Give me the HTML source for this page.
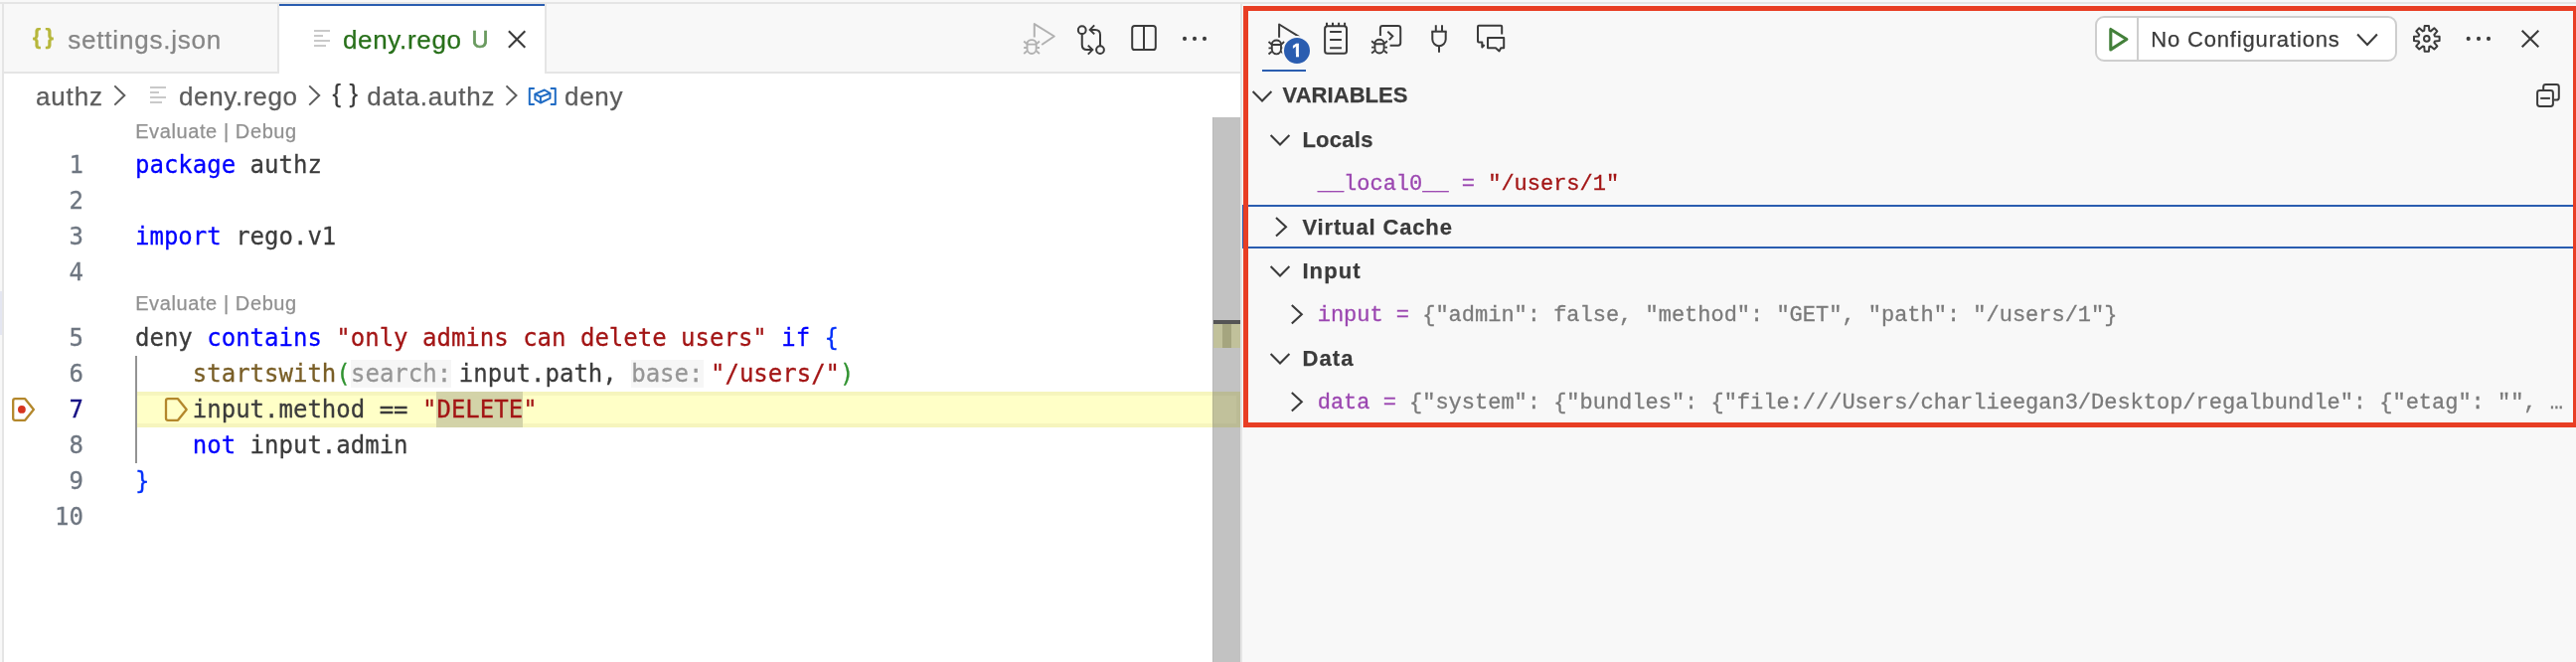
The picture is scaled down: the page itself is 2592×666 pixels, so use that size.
<!DOCTYPE html>
<html lang="en">
<head>
<meta charset="utf-8">
<title>deny.rego — debug variables</title>
<style>
*{box-sizing:border-box;margin:0;padding:0}
html,body{width:2592px;height:666px;overflow:hidden;background:#f8f8f8}
body{position:relative;font-family:"Liberation Sans",sans-serif;color:#3b3b3b}
#app{position:absolute;left:0;top:0;width:2592px;height:666px;will-change:transform}
.a{position:absolute}
.t{position:absolute;white-space:pre;line-height:1}
svg{position:absolute;overflow:visible}
.kw{color:#0000ff}.st{color:#a31515}.fn{color:#795e26}.b1{color:#0431fa}.b2{color:#319331}
.nm{color:#9b46b0}.vl{color:#7a7a7a}
</style>
</head>
<body>
<div id="app">
<!-- window frame -->
<div class="a" style="left:0px;top:2px;width:2592px;height:2px;background:#e5e5e5;"></div>
<div class="a" style="left:2px;top:2px;width:2px;height:664px;background:#e5e5e5;"></div>
<div class="a" style="left:0px;top:293px;width:2px;height:44px;background:#e4e6f1;"></div>
<!-- editor group -->
<div class="a" style="left:4px;top:74px;width:1244px;height:592px;background:#ffffff;"></div>
<div class="a" style="left:4px;top:72px;width:1244px;height:2px;background:#e5e5e5;"></div>
<div class="a" style="left:279px;top:4px;width:2px;height:70px;background:#e5e5e5;"></div>
<div class="a" style="left:281px;top:4px;width:267px;height:70px;background:#ffffff;"></div>
<div class="a" style="left:281px;top:4px;width:267px;height:2px;background:#2a5db0;"></div>
<div class="a" style="left:548px;top:4px;width:2px;height:70px;background:#e5e5e5;"></div>
<!-- tab: settings.json -->
<div class="t" style="left:32.80px;top:25.68px;font:700 22px/1 'Liberation Sans',sans-serif;color:#b7b73b;letter-spacing:4.177px;-webkit-text-stroke:0.25px;">{}</div>
<div class="t" style="left:68.30px;top:26.79px;font:400 26px/1 'Liberation Sans',sans-serif;color:#868686;letter-spacing:0.790px;-webkit-text-stroke:0.25px;">settings.json</div>
<!-- tab: deny.rego -->
<div class="a" style="left:316px;top:30px;width:16px;height:2px;background:#c9c9c9;"></div>
<div class="a" style="left:316px;top:35px;width:9px;height:2px;background:#c9c9c9;"></div>
<div class="a" style="left:316px;top:40px;width:16px;height:2px;background:#c9c9c9;"></div>
<div class="a" style="left:316px;top:45px;width:12px;height:2px;background:#c9c9c9;"></div>
<div class="t" style="left:345.00px;top:26.79px;font:400 26px/1 'Liberation Sans',sans-serif;color:#28701a;letter-spacing:0.661px;-webkit-text-stroke:0.25px;">deny.rego</div>
<div class="t" style="left:474.40px;top:28.91px;font:400 23.5px/1 'Liberation Sans',sans-serif;color:#6a9a5f;-webkit-text-stroke:0.25px;-webkit-text-stroke:0.7px;">U</div>
<svg style="left:508px;top:27px" width="24" height="24" viewBox="0 0 24 24" fill="none" ><path d="M3.9 4.3 L20.3 20.7 M20.3 4.3 L3.9 20.7" stroke="#3b3b3b" stroke-width="2.1"/></svg>
<!-- editor actions -->
<svg style="left:0px;top:0px" width="10" height="10" viewBox="0 0 10 10" fill="none" ><path d="M1040.8 37.4 V24.099999999999998 L1060.8 36.5 L1048.20 45.00" stroke="#b1b1b1" stroke-width="2" stroke-linejoin="round"/><path d="M1033.50 44.15 A4.6 4.0 0 0 1 1042.70 44.15 V48.65 A4.6 5.3 0 0 1 1033.50 48.65 Z M1033.50 44.65 H1042.70" stroke="#b1b1b1" stroke-width="1.9"/><path d="M1030.20 41.60 L1033.10 44.05 M1030.20 48.00 H1032.90 M1030.20 54.00 L1033.50 51.35 M1046.00 41.60 L1043.10 44.05 M1046.00 48.00 H1043.30 M1046.00 54.00 L1042.70 51.35" stroke="#b1b1b1" stroke-width="1.9"/></svg>
<svg style="left:0px;top:0px" width="10" height="10" viewBox="0 0 10 10" fill="none" ><g stroke="#3b3b3b" stroke-width="2" stroke-linecap="butt" stroke-linejoin="miter"><circle cx="1088.75" cy="30.2" r="3.9"/><circle cx="1107" cy="50.1" r="3.9"/><path d="M1088.75 34.2 V45.1 Q1088.75 50.1 1093.75 50.1 H1098.6"/><path d="M1094.8 45.6 L1099.3 50.1 L1094.8 54.6"/><path d="M1107 46.1 V34.9 Q1107 29.9 1102 29.9 H1097.4"/><path d="M1101.2 25.4 L1096.7 29.9 L1101.2 34.4"/></g></svg>
<svg style="left:0px;top:0px" width="10" height="10" viewBox="0 0 10 10" fill="none" ><g stroke="#3b3b3b" stroke-width="2"><rect x="1139.2" y="26" width="23.6" height="24" rx="2.6"/><path d="M1151 26 V50"/></g></svg>
<svg style="left:0px;top:0px" width="10" height="10" viewBox="0 0 10 10" fill="none" ><g fill="#3b3b3b"><circle cx="1192" cy="38.9" r="2.05"/><circle cx="1202" cy="38.9" r="2.05"/><circle cx="1212" cy="38.9" r="2.05"/></g></svg>
<!-- breadcrumbs -->
<div class="t" style="left:36.00px;top:83.99px;font:400 26px/1 'Liberation Sans',sans-serif;color:#5c5c5c;letter-spacing:0.849px;-webkit-text-stroke:0.25px;">authz</div>
<svg style="left:0px;top:0px" width="10" height="10" viewBox="0 0 10 10" fill="none" ><path d="M115.3 86.4 L125.3 96 L115.3 105.6" stroke="#5c5c5c" stroke-width="2"/></svg>
<div class="a" style="left:151px;top:87px;width:16px;height:2px;background:#c9c9c9;"></div>
<div class="a" style="left:151px;top:92px;width:9px;height:2px;background:#c9c9c9;"></div>
<div class="a" style="left:151px;top:97px;width:16px;height:2px;background:#c9c9c9;"></div>
<div class="a" style="left:151px;top:102px;width:12px;height:2px;background:#c9c9c9;"></div>
<div class="t" style="left:180.00px;top:83.99px;font:400 26px/1 'Liberation Sans',sans-serif;color:#5c5c5c;letter-spacing:0.661px;-webkit-text-stroke:0.25px;">deny.rego</div>
<svg style="left:0px;top:0px" width="10" height="10" viewBox="0 0 10 10" fill="none" ><path d="M311.2 86.4 L321.2 96 L311.2 105.6" stroke="#5c5c5c" stroke-width="2"/></svg>
<div class="t" style="left:334.40px;top:81.61px;font:400 25.5px/1 'Liberation Sans',sans-serif;color:#3b3b3b;letter-spacing:8.567px;-webkit-text-stroke:0.25px;">{}</div>
<div class="t" style="left:369.20px;top:83.99px;font:400 26px/1 'Liberation Sans',sans-serif;color:#5c5c5c;letter-spacing:0.752px;-webkit-text-stroke:0.25px;">data.authz</div>
<svg style="left:0px;top:0px" width="10" height="10" viewBox="0 0 10 10" fill="none" ><path d="M509.5 86.4 L519.5 96 L509.5 105.6" stroke="#5c5c5c" stroke-width="2"/></svg>
<svg style="left:0px;top:0px" width="10" height="10" viewBox="0 0 10 10" fill="none" ><g stroke="#1f6bc4" stroke-width="2" stroke-linejoin="round"><path d="M537.8 89.1 H532.8 V105 H537.8"/><path d="M553.8 89.1 H558.8 V105 H553.8"/><path d="M538.4 94.6 L547.9 90.5 L553.5 93.8 L543.9 97.4 Z"/><path d="M538.4 94.6 V100 L543.9 103.5 L553.5 98.9 V93.8 M543.9 97.4 V103.5"/></g></svg>
<div class="t" style="left:568.00px;top:83.99px;font:400 26px/1 'Liberation Sans',sans-serif;color:#5c5c5c;letter-spacing:0.673px;-webkit-text-stroke:0.25px;">deny</div>
<!-- editor content -->
<div class="t" style="left:136.20px;top:121.67px;font:400 20px/1 'Liberation Sans',sans-serif;color:#919191;letter-spacing:0.595px;-webkit-text-stroke:0.25px;">Evaluate | Debug</div>
<div class="t" style="left:136.20px;top:294.67px;font:400 20px/1 'Liberation Sans',sans-serif;color:#919191;letter-spacing:0.595px;-webkit-text-stroke:0.25px;">Evaluate | Debug</div>
<div class="a" style="left:136px;top:394px;width:1112px;height:36px;background:#ffffc7;"></div>
<div class="a" style="left:136px;top:394px;width:1112px;height:4px;background:#f6f5bd;"></div>
<div class="a" style="left:136px;top:426px;width:1112px;height:4px;background:#f6f5bd;"></div>
<div class="a" style="left:439.45px;top:394px;width:86.69999999999999px;height:36px;background:#d3d3a8;"></div>
<div class="a" style="left:136px;top:358px;width:2px;height:108px;background:#939393;"></div>
<div class="a" style="left:353px;top:362px;width:101.2px;height:28px;background:#f6f6f6;"></div>
<div class="a" style="left:635.2px;top:362px;width:72.4px;height:28px;background:#f6f6f6;"></div>
<div class="t" style="left:0;width:84px;text-align:right;top:148px;font:24px/36px 'DejaVu Sans Mono','Liberation Mono',monospace;color:#6e7681;-webkit-text-stroke:0.3px">1</div>
<div class="t" style="left:0;width:84px;text-align:right;top:184px;font:24px/36px 'DejaVu Sans Mono','Liberation Mono',monospace;color:#6e7681;-webkit-text-stroke:0.3px">2</div>
<div class="t" style="left:0;width:84px;text-align:right;top:220px;font:24px/36px 'DejaVu Sans Mono','Liberation Mono',monospace;color:#6e7681;-webkit-text-stroke:0.3px">3</div>
<div class="t" style="left:0;width:84px;text-align:right;top:256px;font:24px/36px 'DejaVu Sans Mono','Liberation Mono',monospace;color:#6e7681;-webkit-text-stroke:0.3px">4</div>
<div class="t" style="left:0;width:84px;text-align:right;top:322px;font:24px/36px 'DejaVu Sans Mono','Liberation Mono',monospace;color:#6e7681;-webkit-text-stroke:0.3px">5</div>
<div class="t" style="left:0;width:84px;text-align:right;top:358px;font:24px/36px 'DejaVu Sans Mono','Liberation Mono',monospace;color:#6e7681;-webkit-text-stroke:0.3px">6</div>
<div class="t" style="left:0;width:84px;text-align:right;top:394px;font:24px/36px 'DejaVu Sans Mono','Liberation Mono',monospace;color:#171184;-webkit-text-stroke:0.3px">7</div>
<div class="t" style="left:0;width:84px;text-align:right;top:430px;font:24px/36px 'DejaVu Sans Mono','Liberation Mono',monospace;color:#6e7681;-webkit-text-stroke:0.3px">8</div>
<div class="t" style="left:0;width:84px;text-align:right;top:466px;font:24px/36px 'DejaVu Sans Mono','Liberation Mono',monospace;color:#6e7681;-webkit-text-stroke:0.3px">9</div>
<div class="t" style="left:0;width:84px;text-align:right;top:502px;font:24px/36px 'DejaVu Sans Mono','Liberation Mono',monospace;color:#6e7681;-webkit-text-stroke:0.3px">10</div>
<div class="t" style="left:136.00px;top:148px;height:36px;font:24px/36px 'DejaVu Sans Mono','Liberation Mono',monospace;color:#3b3b3b;-webkit-text-stroke:0.28px"><span class="kw">package</span> authz</div>
<div class="t" style="left:136.00px;top:220px;height:36px;font:24px/36px 'DejaVu Sans Mono','Liberation Mono',monospace;color:#3b3b3b;-webkit-text-stroke:0.28px"><span class="kw">import</span> rego.v1</div>
<div class="t" style="left:136.00px;top:322px;height:36px;font:24px/36px 'DejaVu Sans Mono','Liberation Mono',monospace;color:#3b3b3b;-webkit-text-stroke:0.28px">deny <span class="kw">contains</span> <span class="st">"only admins can delete users"</span> <span class="kw">if</span> <span class="b1">{</span></div>
<div class="t" style="left:193.80px;top:358px;height:36px;font:24px/36px 'DejaVu Sans Mono','Liberation Mono',monospace;color:#3b3b3b;-webkit-text-stroke:0.28px"><span class="fn">startswith</span><span class="b2">(</span></div>
<div class="t" style="left:353.00px;top:358px;height:36px;font:24px/36px 'DejaVu Sans Mono','Liberation Mono',monospace;color:#969696;-webkit-text-stroke:0.28px">search:</div>
<div class="t" style="left:461.80px;top:358px;height:36px;font:24px/36px 'DejaVu Sans Mono','Liberation Mono',monospace;color:#3b3b3b;-webkit-text-stroke:0.28px">input.path,</div>
<div class="t" style="left:635.20px;top:358px;height:36px;font:24px/36px 'DejaVu Sans Mono','Liberation Mono',monospace;color:#969696;-webkit-text-stroke:0.28px">base:</div>
<div class="t" style="left:715.00px;top:358px;height:36px;font:24px/36px 'DejaVu Sans Mono','Liberation Mono',monospace;color:#3b3b3b;-webkit-text-stroke:0.28px"><span class="st">"/users/"</span><span class="b2">)</span></div>
<div class="t" style="left:193.80px;top:394px;height:36px;font:24px/36px 'DejaVu Sans Mono','Liberation Mono',monospace;color:#3b3b3b;-webkit-text-stroke:0.28px">input.method == <span class="st">"DELETE"</span></div>
<div class="t" style="left:193.80px;top:430px;height:36px;font:24px/36px 'DejaVu Sans Mono','Liberation Mono',monospace;color:#3b3b3b;-webkit-text-stroke:0.28px"><span class="kw">not</span> input.admin</div>
<div class="t" style="left:136.00px;top:466px;height:36px;font:24px/36px 'DejaVu Sans Mono','Liberation Mono',monospace;color:#3b3b3b;-webkit-text-stroke:0.28px"><span class="b1">}</span></div>
<svg style="left:0px;top:0px" width="10" height="10" viewBox="0 0 10 10" fill="none" ><path d="M15.2 401.2 H25.2 L33.9 412 L25.2 422.8 H15.2 Q13.2 422.8 13.2 420.8 V403.2 Q13.2 401.2 15.2 401.2 Z" stroke="#b3872b" stroke-width="2.3" stroke-linejoin="round"/><circle cx="21.9" cy="411.9" r="3.9" fill="#d6341f"/></svg>
<svg style="left:0px;top:0px" width="10" height="10" viewBox="0 0 10 10" fill="none" ><path d="M169.0 401.2 H179.0 L187.70000000000002 412 L179.0 422.8 H169.0 Q167.0 422.8 167.0 420.8 V403.2 Q167.0 401.2 169.0 401.2 Z" stroke="#b3872b" stroke-width="2.3" stroke-linejoin="round"/></svg>
<!-- scrollbar -->
<div class="a" style="left:1220px;top:118px;width:28px;height:548px;background:#c2c2c2;"></div>
<div class="a" style="left:1220px;top:394px;width:28px;height:36px;background:#c1c19b;"></div>
<div class="a" style="left:1220px;top:394px;width:28px;height:4px;background:#bbbb95;"></div>
<div class="a" style="left:1220px;top:426px;width:28px;height:4px;background:#bbbb95;"></div>
<div class="a" style="left:1244px;top:394px;width:4px;height:36px;background:#bbbb95;"></div>
<div class="a" style="left:1220px;top:118px;width:1px;height:548px;background:#b9b9b9;"></div>
<div class="a" style="left:1220px;top:394px;width:1px;height:36px;background:#b4b490;"></div>
<div class="a" style="left:1221px;top:322px;width:27px;height:4px;background:#555555;"></div>
<div class="a" style="left:1221px;top:326px;width:27px;height:24px;background:#c1c19b;"></div>
<div class="a" style="left:1230px;top:326px;width:9px;height:24px;background:#a5a57f;"></div>
<div class="a" style="left:1248px;top:4px;width:2px;height:662px;background:#e5e5e5;"></div>
<!-- debug view: toolbar -->
<svg style="left:0px;top:0px" width="10" height="10" viewBox="0 0 10 10" fill="none" ><path d="M1287.1 37.8 V24.5 L1307.1 36.9 L1294.50 45.40" stroke="#3b3b3b" stroke-width="2" stroke-linejoin="round"/><path d="M1279.80 44.55 A4.6 4.0 0 0 1 1289.00 44.55 V49.05 A4.6 5.3 0 0 1 1279.80 49.05 Z M1279.80 45.05 H1289.00" stroke="#3b3b3b" stroke-width="1.9"/><path d="M1276.50 42.00 L1279.40 44.45 M1276.50 48.40 H1279.20 M1276.50 54.40 L1279.80 51.75 M1292.30 42.00 L1289.40 44.45 M1292.30 48.40 H1289.60 M1292.30 54.40 L1289.00 51.75" stroke="#3b3b3b" stroke-width="1.9"/></svg>
<div class="a" style="left:1270px;top:70px;width:44px;height:2px;background:#2a5db0;"></div>
<div class="a" style="left:1290.2px;top:36px;width:30px;height:30px;border-radius:15px;background:#2a5db0;border:2px solid #f8f8f8"></div>
<div class="t" style="left:1300.00px;top:41.66px;font:700 18px/1 'Liberation Sans',sans-serif;color:#ffffff;-webkit-text-stroke:0.25px;-webkit-text-stroke:0.6px;">1</div>
<div class="a" style="left:1299.5px;top:54.3px;width:4px;height:3.4px;background:#2a5db0;"></div>
<div class="a" style="left:1307px;top:54.3px;width:4px;height:3.4px;background:#2a5db0;"></div>
<svg style="left:0px;top:0px" width="10" height="10" viewBox="0 0 10 10" fill="none" ><g stroke="#3b3b3b" stroke-width="2"><rect x="1333.1" y="26.3" width="21.9" height="27.5" rx="2.6"/><path d="M1335 22.8 V26.3 M1341 22.8 V26.3 M1347.1 22.8 V26.3 M1353.1 22.8 V26.3"/><path d="M1338.1 31.9 H1349.9 M1338.1 40 H1349.9 M1338.1 48.2 H1349.9"/></g></svg>
<svg style="left:0px;top:0px" width="10" height="10" viewBox="0 0 10 10" fill="none" ><g stroke="#3b3b3b" stroke-width="2" stroke-linejoin="round"><path d="M1388.9 36 V28.4 Q1388.9 26 1391.3 26 H1406.8 Q1409.2 26 1409.2 28.4 V43.3 Q1409.2 45.7 1406.8 45.7 H1398.6"/><path d="M1396.3 31.7 L1401.3 36.4 L1397.9 40.2" stroke-linejoin="miter"/></g><path d="M1383.40 43.75 A4.6 4.0 0 0 1 1392.60 43.75 V48.25 A4.6 5.3 0 0 1 1383.40 48.25 Z M1383.40 44.25 H1392.60" stroke="#3b3b3b" stroke-width="1.9"/><path d="M1380.10 41.20 L1383.00 43.65 M1380.10 47.60 H1382.80 M1380.10 53.60 L1383.40 50.95 M1395.90 41.20 L1393.00 43.65 M1395.90 47.60 H1393.20 M1395.90 53.60 L1392.60 50.95" stroke="#3b3b3b" stroke-width="1.9"/></svg>
<svg style="left:0px;top:0px" width="10" height="10" viewBox="0 0 10 10" fill="none" ><g stroke="#3b3b3b" stroke-width="2"><path d="M1444.8 25.3 V31.7 M1451 25.3 V31.7"/><path d="M1440.3 31.7 H1455.7"/><path d="M1441.3 31.7 V39.5 A6.7 6.7 0 0 0 1454.7 39.5 V31.7"/><path d="M1448 46.2 V52.8"/></g></svg>
<svg style="left:0px;top:0px" width="10" height="10" viewBox="0 0 10 10" fill="none" ><g stroke="#3b3b3b" stroke-width="2" stroke-linejoin="round"><path d="M1511.2 34.6 V26.8 Q1511.2 25.8 1510.2 25.8 H1488 Q1487 25.8 1487 26.8 V41.6 Q1487 42.6 1488 42.6 H1491.3 V47.6 L1493.6 45"/><path d="M1497 38 H1513.2 V48.3 H1510.2 L1508.6 51.4 L1505 48.3 H1497 Z" stroke-linejoin="round"/></g></svg>
<!-- start debug dropdown -->
<div class="a" style="left:2108px;top:16px;width:304px;height:46px;border:2px solid #cecece;border-radius:9px;background:#ffffff"></div>
<div class="a" style="left:2150px;top:18px;width:2px;height:42px;background:#cecece;"></div>
<svg style="left:0px;top:0px" width="10" height="10" viewBox="0 0 10 10" fill="none" ><path d="M2123.8 29.5 V49.9 L2139.9 39.5 Z" stroke="#43803a" stroke-width="3.1" stroke-linejoin="round"/></svg>
<div class="t" style="left:2164.20px;top:29.28px;font:400 22px/1 'Liberation Sans',sans-serif;color:#3b3b3b;letter-spacing:0.844px;-webkit-text-stroke:0.25px;">No Configurations</div>
<svg style="left:0px;top:0px" width="10" height="10" viewBox="0 0 10 10" fill="none" ><path d="M2372.1 34.5 L2382 44.900000000000006 L2391.9 34.5" stroke="#3b3b3b" stroke-width="2.1"/></svg>
<svg style="left:0px;top:0px" width="10" height="10" viewBox="0 0 10 10" fill="none" ><path d="M2439.29 30.78 L2439.66 26.08 L2443.94 26.08 L2444.31 30.78 L2445.77 31.38 L2449.36 28.32 L2452.38 31.34 L2449.32 34.93 L2449.92 36.39 L2454.62 36.76 L2454.62 41.04 L2449.92 41.41 L2449.32 42.87 L2452.38 46.46 L2449.36 49.48 L2445.77 46.42 L2444.31 47.02 L2443.94 51.72 L2439.66 51.72 L2439.29 47.02 L2437.83 46.42 L2434.24 49.48 L2431.22 46.46 L2434.28 42.87 L2433.68 41.41 L2428.98 41.04 L2428.98 36.76 L2433.68 36.39 L2434.28 34.93 L2431.22 31.34 L2434.24 28.32 L2437.83 31.38 Z" stroke="#3b3b3b" stroke-width="2" stroke-linejoin="round"/><circle cx="2441.8" cy="38.9" r="2.8" stroke="#3b3b3b" stroke-width="2"/></svg>
<svg style="left:0px;top:0px" width="10" height="10" viewBox="0 0 10 10" fill="none" ><g fill="#3b3b3b"><circle cx="2483.7" cy="38.9" r="2.05"/><circle cx="2494" cy="38.9" r="2.05"/><circle cx="2504" cy="38.9" r="2.05"/></g></svg>
<svg style="left:0px;top:0px" width="10" height="10" viewBox="0 0 10 10" fill="none" ><path d="M2537.7 30.7 L2554.3 47.3 M2554.3 30.7 L2537.7 47.3" stroke="#3b3b3b" stroke-width="2.1"/></svg>
<!-- variables pane -->
<svg style="left:0px;top:0px" width="10" height="10" viewBox="0 0 10 10" fill="none" ><path d="M1260.6 92.1 L1270 101.5 L1279.4 92.1" stroke="#3b3b3b" stroke-width="2.1"/></svg>
<div class="t" style="left:1290.60px;top:84.98px;font:700 22px/1 'Liberation Sans',sans-serif;color:#3b3b3b;letter-spacing:0.051px;-webkit-text-stroke:0.25px;">VARIABLES</div>
<svg style="left:0px;top:0px" width="10" height="10" viewBox="0 0 10 10" fill="none" ><g stroke="#3b3b3b" stroke-width="2"><rect x="2553.1" y="91.1" width="15.8" height="15.8" rx="2.4"/><path d="M2556.2 98.9 H2565.9"/><path d="M2559.2 90.1 V87.4 Q2559.2 85 2561.6 85 H2572.4 Q2574.8 85 2574.8 87.4 V98.2 Q2574.8 100.6 2572.4 100.6 H2569.9"/></g></svg>
<svg style="left:0px;top:0px" width="10" height="10" viewBox="0 0 10 10" fill="none" ><path d="M1278.6 136.0 L1288 145.39999999999998 L1297.4 136.0" stroke="#3b3b3b" stroke-width="2.1"/></svg>
<div class="t" style="left:1310.40px;top:129.68px;font:700 22px/1 'Liberation Sans',sans-serif;color:#3b3b3b;letter-spacing:0.261px;-webkit-text-stroke:0.25px;">Locals</div>
<svg style="left:0px;top:0px" width="10" height="10" viewBox="0 0 10 10" fill="none" ><path d="M1284.0 219.0 L1294.0 228.3 L1284.0 237.60000000000002" stroke="#3b3b3b" stroke-width="2.1"/></svg>
<div class="t" style="left:1310.40px;top:217.68px;font:700 22px/1 'Liberation Sans',sans-serif;color:#3b3b3b;letter-spacing:0.858px;-webkit-text-stroke:0.25px;">Virtual Cache</div>
<svg style="left:0px;top:0px" width="10" height="10" viewBox="0 0 10 10" fill="none" ><path d="M1278.6 268.0 L1288 277.4 L1297.4 268.0" stroke="#3b3b3b" stroke-width="2.1"/></svg>
<div class="t" style="left:1310.40px;top:261.68px;font:700 22px/1 'Liberation Sans',sans-serif;color:#3b3b3b;letter-spacing:1.112px;-webkit-text-stroke:0.25px;">Input</div>
<svg style="left:0px;top:0px" width="10" height="10" viewBox="0 0 10 10" fill="none" ><path d="M1278.6 356.0 L1288 365.4 L1297.4 356.0" stroke="#3b3b3b" stroke-width="2.1"/></svg>
<div class="t" style="left:1310.40px;top:349.68px;font:700 22px/1 'Liberation Sans',sans-serif;color:#3b3b3b;letter-spacing:1.105px;-webkit-text-stroke:0.25px;">Data</div>
<div class="a" style="left:1250px;top:206px;width:1339px;height:2px;background:#2a5db0;"></div>
<div class="a" style="left:1250px;top:248px;width:1339px;height:2px;background:#2a5db0;"></div>
<div class="a" style="left:1250px;top:206px;width:2px;height:44px;background:#2a5db0;"></div>
<div class="t" style="left:1325.7px;top:174.54px;font:22px/1 'Liberation Mono',monospace;letter-spacing:-0.01px;color:#7a7a7a;-webkit-text-stroke:0.3px"><span class="nm">__local0__ =</span> <span class="st">"/users/1"</span></div>
<svg style="left:0px;top:0px" width="10" height="10" viewBox="0 0 10 10" fill="none" ><path d="M1299.8 307.0 L1309.8 316.3 L1299.8 325.6" stroke="#3b3b3b" stroke-width="2.1"/></svg>
<div class="t" style="left:1325.7px;top:306.54px;font:22px/1 'Liberation Mono',monospace;letter-spacing:-0.01px;color:#7a7a7a;-webkit-text-stroke:0.3px"><span class="nm">input =</span> {"admin": false, "method": "GET", "path": "/users/1"}</div>
<svg style="left:0px;top:0px" width="10" height="10" viewBox="0 0 10 10" fill="none" ><path d="M1299.8 395.0 L1309.8 404.3 L1299.8 413.6" stroke="#3b3b3b" stroke-width="2.1"/></svg>
<div class="t" style="left:1325.7px;top:394.54px;font:22px/1 'Liberation Mono',monospace;letter-spacing:-0.01px;color:#7a7a7a;-webkit-text-stroke:0.3px"><span class="nm">data =</span> {"system": {"bundles": {"file:///Users/charlieegan3/Desktop/regalbundle": {"etag": "", …</div>
<!-- annotation -->
<div class="a" style="left:1251px;top:6px;width:1343px;height:424px;border:5px solid #e83e24"></div>
</div>
</body>
</html>
